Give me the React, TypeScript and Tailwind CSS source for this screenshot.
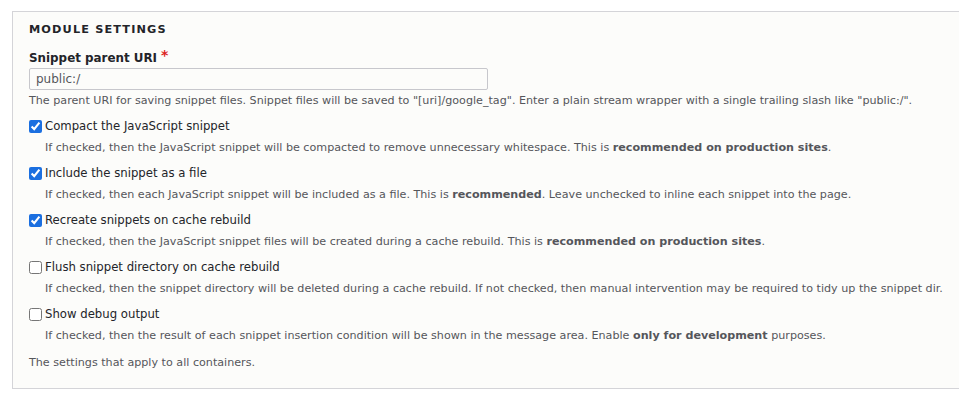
import type { ReactNode } from 'react';

type Option = {
  label: string;
  checked: boolean;
  help: ReactNode;
};

const options: Option[] = [
  {
    label: 'Compact the JavaScript snippet',
    checked: true,
    help: (
      <>
        If checked, then the JavaScript snippet will be compacted to remove unnecessary whitespace. This is{' '}
        <strong className="font-bold">recommended on production sites</strong>.
      </>
    )
  },
  {
    label: 'Include the snippet as a file',
    checked: true,
    help: (
      <>
        If checked, then each JavaScript snippet will be included as a file. This is{' '}
        <strong className="font-bold">recommended</strong>. Leave unchecked to inline each snippet into the page.
      </>
    )
  },
  {
    label: 'Recreate snippets on cache rebuild',
    checked: true,
    help: (
      <>
        If checked, then the JavaScript snippet files will be created during a cache rebuild. This is{' '}
        <strong className="font-bold">recommended on production sites</strong>.
      </>
    )
  },
  {
    label: 'Flush snippet directory on cache rebuild',
    checked: false,
    help: (
      <>
        If checked, then the snippet directory will be deleted during a cache rebuild. If not checked, then manual
        intervention may be required to tidy up the snippet dir.
      </>
    )
  },
  {
    label: 'Show debug output',
    checked: false,
    help: (
      <>
        If checked, then the result of each snippet insertion condition will be shown in the message area. Enable{' '}
        <strong className="font-bold">only for development</strong> purposes.
      </>
    )
  }
];

function CheckboxItem({ option }: { option: Option }) {
  return (
    <div className="flex flex-col">
      <label className="flex items-center gap-[3px] text-[11.7px] leading-[16px] text-[#232429]">
        <input
          type="checkbox"
          defaultChecked={option.checked}
          className="m-0 h-[13px] w-[13px] accent-[#1b6fe0]"
        />
        <span>{option.label}</span>
      </label>
      <div className="mt-[6px] pl-[16px] text-[11.15px] leading-[16px] text-[#55565b] whitespace-nowrap">
        {option.help}
      </div>
    </div>
  );
}

export default function App() {
  return (
    <div className="min-h-[401px] w-[959px] overflow-hidden bg-white pt-[11px] pl-[12px] font-['DejaVu_Sans',sans-serif]">
      <fieldset className="w-[960px] border border-r-0 border-[#d4d4d8] bg-[#fcfcfa] pl-[16px] pt-[10px] pb-[17px]">
        <h2 className="text-[11.3px] font-bold uppercase leading-[16px] tracking-[0.1em] text-[#232429]">
          Module settings
        </h2>
        <div className="mt-[12px]">
          <label className="flex text-[11.9px] font-bold leading-[16px] text-[#232429]">
            Snippet parent URI
            <span className="ml-[4px] -mt-[3px] text-[14px] text-[#dc2323]">*</span>
          </label>
          <input
            type="text"
            defaultValue="public:/"
            className="mt-[1px] h-[22px] w-[459px] rounded-[2px] border border-[#c7c7cc] bg-[#fcfcfa] px-[6px] text-[12px] text-[#55565b] outline-none"
          />
          <div className="mt-[3px] text-[11.15px] leading-[16px] text-[#55565b] whitespace-nowrap">
            The parent URI for saving snippet files. Snippet files will be saved to "[uri]/google_tag". Enter a plain
            stream wrapper with a single trailing slash like "public:/".
          </div>
        </div>
        <div className="mt-[9px] flex flex-col gap-[9px]">
          {options.map((option) => (
            <CheckboxItem key={option.label} option={option} />
          ))}
        </div>
        <div className="mt-[11px] text-[11.15px] leading-[16px] text-[#55565b]">
          The settings that apply to all containers.
        </div>
      </fieldset>
    </div>
  );
}
